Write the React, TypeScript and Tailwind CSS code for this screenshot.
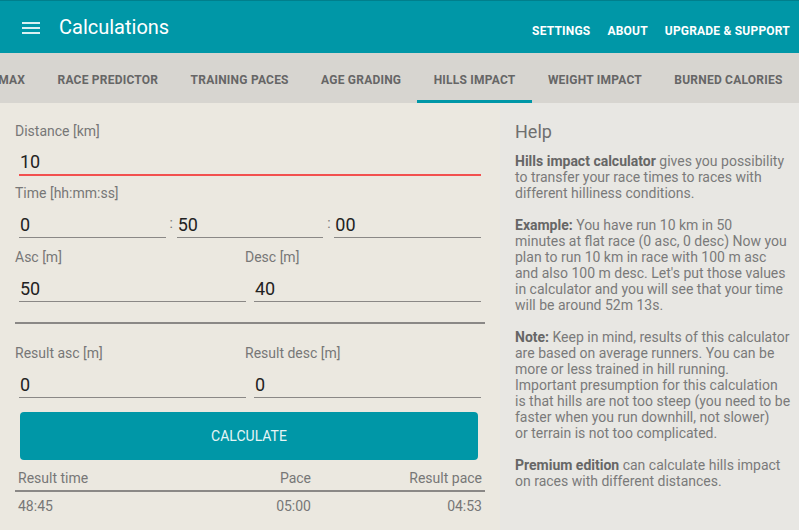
const font = { fontFamily: "Roboto, 'Liberation Sans', sans-serif" };

function Field({ value, active = false }: { value: string; active?: boolean }) {
  return (
    <div
      className={`flex-1 h-[36px] flex items-end pb-[3px] pl-[1px] text-[18px] leading-none text-[#222] ${active ? "border-b-2 border-[#f2504f]" : "border-b-[1.5px] border-[#8a8886]"}`}
    >
      {value}
    </div>
  );
}

function Label({ children }: { children: string }) {
  return <div className="text-[14px] leading-none text-[#777]">{children}</div>;
}

function Lines({ lines, first = false }: { lines: React.ReactNode[]; first?: boolean }) {
  return (
    <div className={first ? "" : "mt-[16px]"}>
      {lines.map((l, i) => (
        <div key={i} className="whitespace-nowrap">
          {l}
        </div>
      ))}
    </div>
  );
}

const tabs = ["MAX", "RACE PREDICTOR", "TRAINING PACES", "AGE GRADING", "HILLS IMPACT", "WEIGHT IMPACT", "BURNED CALORIES"];

export default function App() {
  return (
    <div style={font} className="w-[799px] h-[530px] overflow-hidden flex flex-col bg-[#ebe8e0]">
      <header className="h-[53px] shrink-0 bg-[#0097a7] border-t border-[#007f8c] flex items-center text-white">
        <svg width="18" height="14" viewBox="0 0 18 14" className="ml-[22px] mt-[2px]">
          <rect x="0" y="1" width="18" height="2" fill="#d9f0f2" />
          <rect x="0" y="6" width="18" height="2" fill="#d9f0f2" />
          <rect x="0" y="11" width="18" height="2" fill="#d9f0f2" />
        </svg>
        <h1 className="ml-[19px] text-[20px] leading-none">Calculations</h1>
        <nav className="ml-auto mr-[9px] flex gap-[17px] text-[12px] font-bold tracking-[0.2px] mt-[7px]">
          <span>SETTINGS</span>
          <span>ABOUT</span>
          <span>UPGRADE &amp; SUPPORT</span>
        </nav>
      </header>

      <div className="h-[50px] shrink-0 bg-[#d7d5d0] flex overflow-hidden">
        <div className="flex ml-[-18px] whitespace-nowrap">
          {tabs.map((t) => (
            <div
              key={t}
              className={`px-[16.2px] flex items-center text-[12px] font-bold tracking-[0.22px] text-[#666] border-b-[3px] ${t === "HILLS IMPACT" ? "border-[#0097a7]" : "border-transparent"}`}
            >
              <span className="mt-[6px]">{t}</span>
            </div>
          ))}
        </div>
      </div>

      <div className="flex flex-1 min-h-0">
        <main className="w-[500px] shrink-0 px-[15px] pt-[21px]">
          <Label>Distance [km]</Label>
          <div className="px-[4px] mt-[2px]">
            <Field value="10" active />
          </div>

          <div className="mt-[10px]">
            <Label>Time [hh:mm:ss]</Label>
          </div>
          <div className="flex items-end px-[4px] mt-[2px]">
            <Field value="0" />
            <span className="w-[11px] text-center text-[14px] text-[#777] pb-[4px]">:</span>
            <Field value="50" />
            <span className="w-[11px] text-center text-[14px] text-[#777] pb-[4px]">:</span>
            <Field value="00" />
          </div>

          <div className="flex mt-[12px]">
            <div className="w-[230px]">
              <Label>Asc [m]</Label>
            </div>
            <Label>Desc [m]</Label>
          </div>
          <div className="flex gap-[8px] px-[4px] mt-[2px]">
            <Field value="50" />
            <Field value="40" />
          </div>

          <div className="h-[2px] bg-[#8a8886] mt-[20px]" />

          <div className="flex mt-[22px]">
            <div className="w-[230px]">
              <Label>Result asc [m]</Label>
            </div>
            <Label>Result desc [m]</Label>
          </div>
          <div className="flex gap-[8px] px-[4px] mt-[2px]">
            <Field value="0" />
            <Field value="0" />
          </div>

          <button className="mt-[14px] ml-[5px] w-[458px] h-[48px] rounded-[4px] bg-[#0097a7] text-[#e6f5f6] text-[14px]">
            CALCULATE
          </button>

          <div className="flex px-[3px] mt-[11px] text-[14px] text-[#777] leading-none">
            <span className="flex-1">Result time</span>
            <span>Pace</span>
            <span className="w-[171px] text-right">Result pace</span>
          </div>
          <div className="h-[2px] bg-[#8a8886] mt-[5px]" />
          <div className="flex px-[3px] mt-[7px] text-[14px] text-[#777] leading-none">
            <span className="flex-1">48:45</span>
            <span>05:00</span>
            <span className="w-[171px] text-right">04:53</span>
          </div>
        </main>

        <aside className="flex-1 bg-[#e8e7e3] pl-[15px] pt-[20px] text-[14px] leading-[16px] text-[#7a7a7a]">
          <h2 className="text-[18px] leading-none text-[#6f6f6f] mb-[12px]">Help</h2>
          <Lines
            first
            lines={[
              <>
                <b className="text-[#666]">Hills impact calculator</b> gives you possibility
              </>,
              "to transfer your race times to races with",
              "different hilliness conditions.",
            ]}
          />
          <Lines
            lines={[
              <>
                <b className="text-[#666]">Example:</b> You have run 10 km in 50
              </>,
              "minutes at flat race (0 asc, 0 desc) Now you",
              "plan to run 10 km in race with 100 m asc",
              "and also 100 m desc. Let's put those values",
              "in calculator and you will see that your time",
              "will be around 52m 13s.",
            ]}
          />
          <Lines
            lines={[
              <>
                <b className="text-[#666]">Note:</b> Keep in mind, results of this calculator
              </>,
              "are based on average runners. You can be",
              "more or less trained in hill running.",
              "Important presumption for this calculation",
              "is that hills are not too steep (you need to be",
              "faster when you run downhill, not slower)",
              "or terrain is not too complicated.",
            ]}
          />
          <Lines
            lines={[
              <>
                <b className="text-[#666]">Premium edition</b> can calculate hills impact
              </>,
              "on races with different distances.",
            ]}
          />
        </aside>
      </div>
    </div>
  );
}
